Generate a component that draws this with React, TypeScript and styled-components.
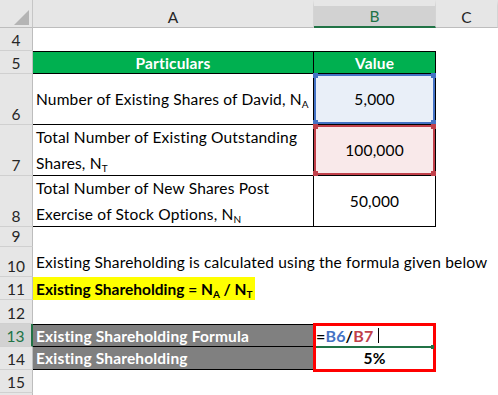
import React from 'react';
import styled, { createGlobalStyle, css } from 'styled-components';

const GlobalStyle = createGlobalStyle`
  html, body {
    margin: 0;
    padding: 0;
    background: #fff;
  }
  body {
    font-family: Lato, "Liberation Sans", sans-serif;
  }
`;

const ROW_HEIGHTS = [28, 23, 23, 51, 51, 51, 20, 30, 23, 24, 23, 23, 23, 23];

const Sheet = styled.div`
  display: grid;
  grid-template-columns: 33px 281px 122px 62px;
  grid-template-rows: ${ROW_HEIGHTS.map((h) => `${h}px`).join(' ')};
  width: 498px;
  height: 395px;
  overflow: hidden;
  font-size: 15.5px;
  letter-spacing: 0.17px;
  color: #000;
`;

const Corner = styled.div`
  position: relative;
  box-sizing: border-box;
  background: #e6e6e6;
  border-right: 1px solid #c6c6c6;
  border-bottom: 1px solid #bdbdbd;
  &::after {
    content: '';
    position: absolute;
    right: 3px;
    bottom: 2px;
    border-style: solid;
    border-width: 0 0 15px 15px;
    border-color: transparent transparent #b4b4b4 transparent;
  }
`;

const ColHead = styled.div<{ $active?: boolean }>`
  box-sizing: border-box;
  display: flex;
  align-items: center;
  justify-content: center;
  border-top: 6px solid #e6e6e6;
  border-right: 1px solid #d4d4d4;
  letter-spacing: 0;
  background: ${(p) => (p.$active ? '#d2d2d2' : '#e6e6e6')};
  color: ${(p) => (p.$active ? '#217346' : '#262626')};
  border-bottom: ${(p) => (p.$active ? '2px solid #217346' : '1px solid #bdbdbd')};
`;

const RowHead = styled.div<{ $active?: boolean }>`
  box-sizing: border-box;
  display: flex;
  align-items: flex-end;
  justify-content: center;
  padding-bottom: 1px;
  letter-spacing: 0;
  background: ${(p) => (p.$active ? '#d2d2d2' : '#e6e6e6')};
  color: ${(p) => (p.$active ? '#217346' : '#262626')};
  border-bottom: 1px solid #d0d0d0;
  border-right: ${(p) => (p.$active ? '2px solid #217346' : '1px solid #bdbdbd')};
`;

const Cell = styled.div<{
  $fill?: string;
  $bold?: boolean;
  $color?: string;
  $center?: boolean;
  $boxed?: boolean;
  $top?: boolean;
}>`
  position: relative;
  box-sizing: border-box;
  display: flex;
  align-items: center;
  justify-content: ${(p) => (p.$center ? 'center' : 'flex-start')};
  padding: 0 3px;
  white-space: nowrap;
  background: ${(p) => p.$fill ?? 'transparent'};
  color: ${(p) => p.$color ?? '#000'};
  font-weight: ${(p) => (p.$bold ? 700 : 400)};
  ${(p) =>
    p.$boxed &&
    css`
      border-right: 1px solid #000;
      border-bottom: 1px solid #000;
    `}
  ${(p) =>
    p.$top &&
    css`
      border-top: 1px solid #000;
    `}
`;

const Wrapped = styled.div`
  line-height: 26px;
`;

const Sub = styled.sub`
  font-size: 10px;
  vertical-align: -3px;
  line-height: 0;
  letter-spacing: 0;
`;

const Highlight = styled.span`
  display: inline-flex;
  align-items: center;
  align-self: stretch;
  margin-left: -3px;
  padding: 0 2px 0 3px;
  background: #ffff00;
  font-weight: 700;
  letter-spacing: 0;
`;

const RefBox = styled.div<{ $tone: string; $tint: string }>`
  position: absolute;
  inset: 0;
  box-sizing: border-box;
  border: 2px solid ${(p) => p.$tone};
  background: ${(p) => p.$tint};
  z-index: 1;
`;

const Handle = styled.span<{ $tone: string; $x: 'left' | 'right'; $y: 'top' | 'bottom' }>`
  position: absolute;
  width: 5px;
  height: 5px;
  background: ${(p) => p.$tone};
  ${(p) => p.$x}: -3px;
  ${(p) => p.$y}: -3px;
`;

const Value = styled.span`
  position: relative;
  z-index: 2;
`;

const SelectBox = styled.div`
  position: absolute;
  left: -1px;
  right: -1px;
  top: -2px;
  height: 49px;
  box-sizing: border-box;
  border: 3px solid #ff0000;
  z-index: 3;
  pointer-events: none;
`;

const ActiveEdge = styled.div`
  position: absolute;
  left: 2px;
  right: 4px;
  bottom: -2px;
  height: 2px;
  background: #217346;
  z-index: 4;
  &::after {
    content: '';
    position: absolute;
    right: -3px;
    top: -1px;
    width: 3px;
    height: 4px;
    background: #217346;
  }
`;

const Formula = styled.span`
  display: inline-flex;
  align-items: center;
  margin-left: -1px;
  font-size: 16px;
  font-weight: 700;
`;

const Ref = styled.span<{ $tone: string }>`
  color: ${(p) => p.$tone};
`;

const Caret = styled.span`
  display: inline-block;
  width: 1px;
  height: 15px;
  margin-left: 5px;
  background: #000;
`;

const BLUE = '#4472c4';
const RED = '#c0404a';

const Corners: React.FC<{ tone: string }> = ({ tone }) => (
  <>
    <Handle $tone={tone} $x="left" $y="top" />
    <Handle $tone={tone} $x="right" $y="top" />
    <Handle $tone={tone} $x="left" $y="bottom" />
    <Handle $tone={tone} $x="right" $y="bottom" />
  </>
);

const Empty: React.FC<{ n?: number }> = ({ n }) => (
  <>
    <RowHead>{n}</RowHead>
    <Cell />
    <Cell />
    <Cell />
  </>
);

export default function App() {
  return (
    <>
      <GlobalStyle />
      <Sheet>
        <Corner />
        <ColHead>A</ColHead>
        <ColHead $active>B</ColHead>
        <ColHead>C</ColHead>

        <Empty n={4} />

        <RowHead>5</RowHead>
        <Cell $fill="#00b050" $color="#fff" $bold $center $boxed $top>Particulars</Cell>
        <Cell $fill="#00b050" $color="#fff" $bold $center $boxed $top>Value</Cell>
        <Cell />

        <RowHead>6</RowHead>
        <Cell $boxed>
          <span>Number of Existing Shares of David, N<Sub>A</Sub></span>
        </Cell>
        <Cell $center $boxed>
          <RefBox $tone={BLUE} $tint="#e9eff8">
            <Corners tone={BLUE} />
          </RefBox>
          <Value>5,000</Value>
        </Cell>
        <Cell />

        <RowHead>7</RowHead>
        <Cell $boxed>
          <Wrapped>
            Total Number of Existing Outstanding
            <br />
            Shares, N<Sub>T</Sub>
          </Wrapped>
        </Cell>
        <Cell $center $boxed>
          <RefBox $tone={RED} $tint="#f9e9ea">
            <Corners tone={RED} />
          </RefBox>
          <Value>100,000</Value>
        </Cell>
        <Cell />

        <RowHead>8</RowHead>
        <Cell $boxed>
          <Wrapped>
            Total Number of New Shares Post
            <br />
            Exercise of Stock Options, N<Sub>N</Sub>
          </Wrapped>
        </Cell>
        <Cell $center $boxed>50,000</Cell>
        <Cell />

        <Empty n={9} />

        <RowHead>10</RowHead>
        <Cell>Existing Shareholding is calculated using the formula given below</Cell>
        <Cell />
        <Cell />

        <RowHead>11</RowHead>
        <Cell>
          <Highlight>
            <span>
              Existing Shareholding = N<Sub>A</Sub> / N<Sub>T</Sub>
            </span>
          </Highlight>
        </Cell>
        <Cell />
        <Cell />

        <Empty n={12} />

        <RowHead $active>13</RowHead>
        <Cell $fill="#808080" $color="#fff" $bold $boxed $top>Existing Shareholding Formula</Cell>
        <Cell $boxed $top>
          <SelectBox />
          <ActiveEdge />
          <Formula>
            =<Ref $tone={BLUE}>B6</Ref>/<Ref $tone={RED}>B7</Ref>
            <Caret />
          </Formula>
        </Cell>
        <Cell />

        <RowHead>14</RowHead>
        <Cell $fill="#808080" $color="#fff" $bold $boxed>Existing Shareholding</Cell>
        <Cell $bold $center $boxed>5%</Cell>
        <Cell />

        <Empty n={15} />
        <Empty />
      </Sheet>
    </>
  );
}
